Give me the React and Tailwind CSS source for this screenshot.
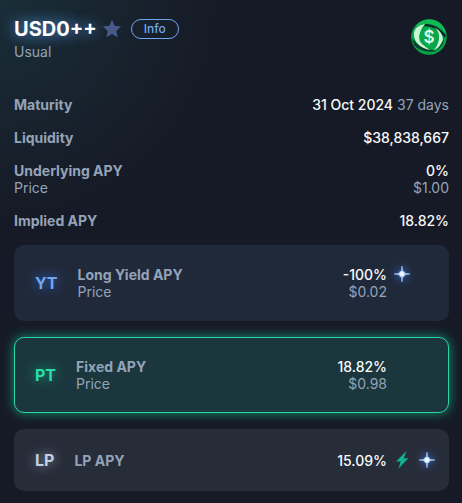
function StarIcon() {
  return (
    <svg viewBox="0 0 20 20" className="size-5 text-[#46598a]" fill="currentColor" aria-hidden="true">
      <path d="M10 .8l2.7 6 6.5.7-4.9 4.4 1.4 6.5L10 15.1l-5.7 3.3 1.4-6.5L.8 7.5l6.5-.7z" />
    </svg>
  );
}

function SparkIcon() {
  return (
    <svg
      viewBox="0 0 16 16"
      className="size-4 overflow-visible drop-shadow-[0_0_4px_#3b82f6]"
      aria-hidden="true"
    >
      <path
        d="M8 0L8.7 5Q10.7 5.3 11 7.3L16 8L11 8.7Q10.7 10.7 8.7 11L8 16L7.3 11Q5.3 10.7 5 8.7L0 8L5 7.3Q5.3 5.3 7.3 5Z"
        fill="#bfdbfe"
        stroke="#a5c8fb"
        strokeWidth="0.6"
      />
      <circle cx="8" cy="8" r="2.2" fill="#f1f7ff" />
    </svg>
  );
}

function BoltIcon() {
  return (
    <svg viewBox="0 0 16 16" className="size-4 overflow-visible" fill="#10b090" aria-hidden="true">
      <path d="M12.4-1L2 9.4H6.6L4.4 16.8L14.4 6.2H9.8z" />
    </svg>
  );
}

function TokenLogo() {
  return (
    <svg viewBox="0 0 36 36" className="mt-[2px] mr-[2px] size-9 shrink-0" role="img" aria-label="USD0++">
      <circle cx="18" cy="18" r="17.8" fill="#07a548" />
      <path d="M4 8A17.8 17.8 0 0 1 29 4Q34 8 35 15Q24 1 9 6Z" fill="#12b954" />
      <path d="M14 5Q25 4 35 16L34 19Q24 7 13 7Z" fill="#062d22" />
      <path d="M1 19Q8 30 26 32Q11 35 3 26Z" fill="#063f2b" />
      <path d="M14 5Q2 7 3 17Q5 28 19 31Q9 25 9 17Q9 10 14 5Z" fill="#c5f8d0" />
      <path d="M23 8Q32 13 32 21Q30 28 23 31Q28 25 28 18Q28 12 23 8Z" fill="#c9f3d4" />
      <path d="M33 18Q34 26 25 32Q31 25 33 18Z" fill="#07512e" />
      <circle cx="18" cy="18" r="10" fill="#0ba54b" />
      <text
        x="18"
        y="24"
        textAnchor="middle"
        className="fill-[#dffbe5] font-['Inter',sans-serif] text-[17px] font-semibold"
      >
        $
      </text>
    </svg>
  );
}

function StatRow({ label, value, note, price }) {
  return (
    <div className="flex justify-between">
      <dt className="font-bold">
        {label}
        {price && <span className="block font-normal">Price</span>}
      </dt>
      <dd className="text-right">
        <span className="font-medium text-slate-50">{value}</span>
        {note && <span> {note}</span>}
        {price && <span className="block">{price}</span>}
      </dd>
    </div>
  );
}

function ApyCard({ badge, badgeClass, cardClass, label, value, price, icons }) {
  return (
    <a
      href="#"
      className={`flex items-center rounded-[10px] border py-5 pl-5 pr-[13px] ${cardClass}`}
    >
      <span className={`mr-5 text-base leading-5 font-bold ${badgeClass}`}>{badge}</span>
      <span className="flex-1 font-bold">
        {label}
        {price && <span className="block font-normal">Price</span>}
      </span>
      <span className="text-right">
        <span className="block font-medium text-slate-50">{value}</span>
        {price && <span className="block">{price}</span>}
      </span>
      <span className={`ml-[7px] flex w-[41px] gap-[9px] ${price ? 'self-start' : ''}`}>{icons}</span>
    </a>
  );
}

export default function App() {
  return (
    <main className="min-h-screen bg-[#161a26] bg-[radial-gradient(circle_at_0_0,#192e38_0,#161a26_220px)] pr-[13px] pl-[14px] pt-[17px] pb-3 font-['Inter',sans-serif] text-sm leading-[17px] text-[#94a3b8]">
      <header className="flex items-start justify-between">
        <div>
          <div className="flex items-center">
            <h1 className="text-xl leading-6 font-bold text-white [text-shadow:0_0_14px_#60a5fa]">
              USD0++
            </h1>
            <button className="ml-[5px]" aria-label="Favorite">
              <StarIcon />
            </button>
            <button className="ml-[9px] h-5 rounded-full border border-[#71a7ee] px-3 text-xs leading-4 font-medium text-[#71a7ee]">
              Info
            </button>
          </div>
          <p className="mt-[2px]">Usual</p>
        </div>
        <TokenLogo />
      </header>

      <dl className="mt-9 flex flex-col gap-4">
        <StatRow label="Maturity" value="31 Oct 2024" note="37 days" />
        <StatRow label="Liquidity" value="$38,838,667" />
        <StatRow label="Underlying APY" value="0%" price="$1.00" />
        <StatRow label="Implied APY" value="18.82%" />
      </dl>

      <div className="mt-4 flex flex-col gap-4">
        <ApyCard
          badge="YT"
          badgeClass="text-[#71a7ee] [text-shadow:0_0_12px_#3b82f6]"
          cardClass="border-transparent bg-[#20293a]"
          label="Long Yield APY"
          value="-100%"
          price="$0.02"
          icons={<SparkIcon />}
        />
        <ApyCard
          badge="PT"
          badgeClass="text-[#2bdcaf] [text-shadow:0_0_12px_#10b981]"
          cardClass="border-[#2bd4aa] bg-[#1b373d] shadow-[0_0_12px_#12956f]"
          label="Fixed APY"
          value="18.82%"
          price="$0.98"
        />
        <ApyCard
          badge="LP"
          badgeClass="text-[#c4cfdf] [text-shadow:0_0_12px_#94a3b8]"
          cardClass="border-transparent bg-[#272c39]"
          label="LP APY"
          value="15.09%"
          icons={
            <>
              <BoltIcon />
              <SparkIcon />
            </>
          }
        />
      </div>
    </main>
  );
}
